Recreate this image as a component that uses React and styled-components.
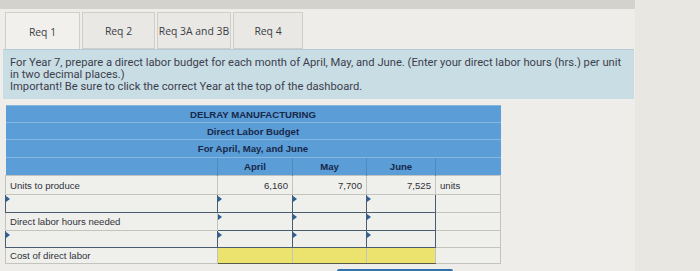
import React from "react";
import styled, { createGlobalStyle } from "styled-components";

const GlobalStyle = createGlobalStyle`
  html, body {
    margin: 0;
    padding: 0;
    background: #e9e7e1;
  }
`;

const Frame = styled.div`
  width: 635px;
  height: 271px;
  overflow: hidden;
  background: #eeede9;
  font-family: "Open Sans", "Noto Sans", sans-serif;
`;

const TopBand = styled.div`
  height: 9px;
  background: #d3d2cd;
`;

const TabRow = styled.div`
  display: flex;
  gap: 2px;
  padding: 3px 0 0 5px;
  height: 40px;
  box-sizing: border-box;
`;

const Tab = styled.div`
  width: ${(p) => p.$w}px;
  display: flex;
  align-items: center;
  justify-content: center;
  border: 1px solid #cfcec9;
  border-bottom: ${(p) => (p.$active ? "none" : "1px solid #cfcec9")};
  background: ${(p) => (p.$active ? "#f1f0ec" : "#e9e8e4")};
  color: #3c3c44;
  font-size: 10.4px;
  padding-top: 1px;
`;

const Instructions = styled.div`
  margin: 0 1px 0 3px;
  padding: 7px 8px 6px 7px;
  height: 50px;
  box-sizing: border-box;
  background: #c9dde5;
  border-top: 1px solid #b5cbd5;
  color: #3d3e4c;
  font-family: Roboto, "Noto Sans", sans-serif;
  font-size: 11.2px;
  line-height: 11.8px;
`;

const Table = styled.table`
  margin: 6px 0 0 5px;
  border-collapse: collapse;
  table-layout: fixed;
  width: 495px;
  font-family: "Liberation Sans", Arial, sans-serif;
  font-size: 9.6px;
`;

const HeadCell = styled.th`
  background: #5b9dd6;
  color: #17284a;
  font-weight: bold;
  height: ${(p) => p.$h}px;
  padding: 0;
  text-align: center;
  border-top: 1px solid #86b7e1;
  border-left: ${(p) => (p.$split ? "1px solid #4f8ac0" : "none")};
`;

const Cell = styled.td`
  position: relative;
  height: ${(p) => p.$h}px;
  padding: 0 4px;
  text-align: ${(p) => (p.$num ? "right" : "left")};
  color: #30323a;
  background: ${(p) => (p.$fill ? "#ebe36e" : "#efefec")};
  border: ${(p) => (p.$input ? "1.5px solid #4a5c70" : "1px solid #c4c4bf")};
  ${(p) =>
    p.$fill &&
    "border-top: 1.5px solid #4a5c70; border-bottom: 1.5px solid #5a5a48;"}

  &::before {
    content: "";
    display: ${(p) => (p.$input ? "block" : "none")};
    position: absolute;
    left: 0;
    top: 1px;
    border-top: 3px solid transparent;
    border-bottom: 3px solid transparent;
    border-left: 4px solid #2c5f95;
  }
`;

const Footer = styled.div`
  padding: 5px 0 0 337px;
`;

const ButtonEdge = styled.div`
  width: 116px;
  height: 6px;
  background: linear-gradient(#2d6aa6, #4d8fcc);
  border-radius: 2px 2px 0 0;
`;

const tabs = [
  { label: "Req 1", w: 73, active: true },
  { label: "Req 2", w: 71 },
  { label: "Req 3A and 3B", w: 72 },
  { label: "Req 4", w: 68 },
];

const months = ["April", "May", "June"];

const LaborBudget = () => (
  <Table>
    <colgroup>
      <col style={{ width: 212 }} />
      <col style={{ width: 75 }} />
      <col style={{ width: 74 }} />
      <col style={{ width: 69 }} />
      <col style={{ width: 65 }} />
    </colgroup>
    <thead>
      <tr>
        <HeadCell colSpan={5} $h={16}>DELRAY MANUFACTURING</HeadCell>
      </tr>
      <tr>
        <HeadCell colSpan={5} $h={16}>Direct Labor Budget</HeadCell>
      </tr>
      <tr>
        <HeadCell colSpan={5} $h={17}>For April, May, and June</HeadCell>
      </tr>
      <tr>
        <HeadCell $h={17} />
        {months.map((m) => (
          <HeadCell key={m} $h={17} $split>
            {m}
          </HeadCell>
        ))}
        <HeadCell $h={17} $split />
      </tr>
    </thead>
    <tbody>
      <tr>
        <Cell $h={18}>Units to produce</Cell>
        <Cell $h={18} $num>6,160</Cell>
        <Cell $h={18} $num>7,700</Cell>
        <Cell $h={18} $num>7,525</Cell>
        <Cell $h={18}>units</Cell>
      </tr>
      <tr>
        <Cell $h={17} $input />
        {months.map((m) => (
          <Cell key={m} $h={17} $input />
        ))}
        <Cell $h={17} />
      </tr>
      <tr>
        <Cell $h={17}>Direct labor hours needed</Cell>
        {months.map((m) => (
          <Cell key={m} $h={17} $input />
        ))}
        <Cell $h={17} />
      </tr>
      <tr>
        <Cell $h={16} $input />
        {months.map((m) => (
          <Cell key={m} $h={16} $input />
        ))}
        <Cell $h={16} />
      </tr>
      <tr>
        <Cell $h={15}>Cost of direct labor</Cell>
        {months.map((m) => (
          <Cell key={m} $h={15} $fill />
        ))}
        <Cell $h={15} />
      </tr>
    </tbody>
  </Table>
);

const App = () => (
  <>
    <GlobalStyle />
    <Frame>
      <TopBand />
      <TabRow>
        {tabs.map((t) => (
          <Tab key={t.label} $w={t.w} $active={t.active}>
            {t.label}
          </Tab>
        ))}
      </TabRow>
      <Instructions>
        For Year 7, prepare a direct labor budget for each month of April, May,
        and June. (Enter your direct labor hours (hrs.) per unit in two decimal
        places.)
        <br />
        Important! Be sure to click the correct Year at the top of the
        dashboard.
      </Instructions>
      <LaborBudget />
      <Footer>
        <ButtonEdge />
      </Footer>
    </Frame>
  </>
);

export default App;
